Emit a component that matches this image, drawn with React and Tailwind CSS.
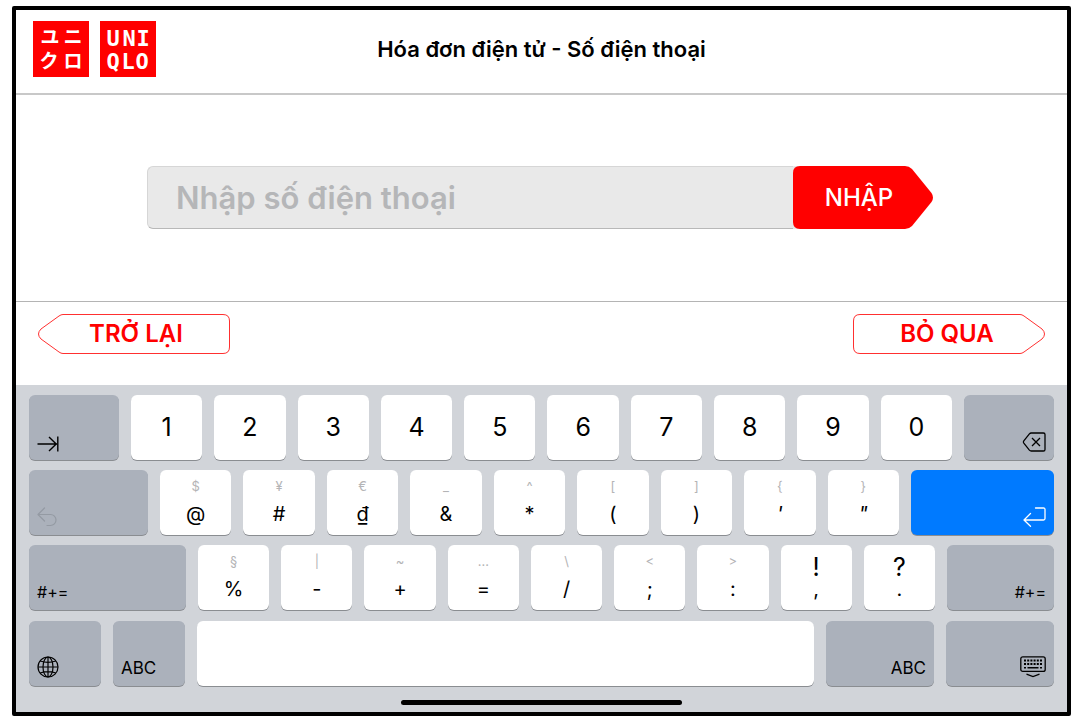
const digits = ['1', '2', '3', '4', '5', '6', '7', '8', '9', '0']

const symbolRow = [
  { alt: '$', main: '@' },
  { alt: '¥', main: '#' },
  { alt: '€', main: '₫' },
  { alt: '_', main: '&' },
  { alt: '^', main: '*' },
  { alt: '[', main: '(' },
  { alt: ']', main: ')' },
  { alt: '{', main: "'", slanted: true },
  { alt: '}', main: '"', slanted: true },
]

const punctuationRow = [
  { alt: '§', main: '%' },
  { alt: '|', main: '-' },
  { alt: '~', main: '+' },
  { alt: '…', main: '=' },
  { alt: '\\', main: '/' },
  { alt: '<', main: ';' },
  { alt: '>', main: ':' },
  { alt: '!', main: ',', strong: true },
  { alt: '?', main: '.', strong: true },
]

function Logo() {
  return (
    <div className="flex gap-[11px]">
      <svg viewBox="0 0 56 56" className="h-14 w-14" role="img" aria-label="ユニクロ">
        <rect width="56" height="56" fill="#ff0000" />
        <g fill="#fff" fontFamily="'Noto Sans CJK JP', sans-serif" fontWeight="700" fontSize="19" textAnchor="middle">
          <text x="17" y="23">ユ</text>
          <text x="40" y="23">ニ</text>
          <text x="16" y="47">ク</text>
          <text x="40" y="47">ロ</text>
        </g>
      </svg>
      <svg viewBox="0 0 56 56" className="h-14 w-14" role="img" aria-label="UNIQLO">
        <rect width="56" height="56" fill="#ff0000" />
        <g fill="#fff" fontFamily="'DejaVu Sans Mono', monospace" fontWeight="700" fontSize="22" textAnchor="middle">
          <text x="13" y="25">U</text>
          <text x="29" y="25">N</text>
          <text x="43" y="25">I</text>
          <text x="13" y="48">Q</text>
          <text x="28" y="48">L</text>
          <text x="42" y="48">O</text>
        </g>
      </svg>
    </div>
  )
}

function TabIcon() {
  return (
    <svg viewBox="0 0 22 16" className="h-4 w-[22px]" fill="none" stroke="currentColor" strokeWidth="1.4">
      <path d="M0.5 8H20M12 1l7.2 7-7.2 7M20.8 0.5v15" />
    </svg>
  )
}

function DeleteIcon() {
  return (
    <svg viewBox="0 0 24 20" className="h-5 w-6" fill="none" stroke="currentColor" strokeWidth="1.3" strokeLinejoin="round">
      <path d="M9.2 1H21.4Q23 1 23 2.6V17.4Q23 19 21.4 19H9.2Q8.2 19 7.4 18.1L1.8 11.2Q0.9 10 1.8 8.8L7.4 1.9Q8.2 1 9.2 1Z" />
      <path d="M10 6l8 8M18 6l-8 8" />
    </svg>
  )
}

function UndoIcon() {
  return (
    <svg viewBox="0 0 20 20" className="h-5 w-5" fill="none" stroke="currentColor" strokeWidth="1.2" strokeLinecap="round" strokeLinejoin="round">
      <path d="M7.5 1L1 7.5l6.5 6.5M1 7.5h12.5a5.5 5.5 0 0 1 0 11H10" />
    </svg>
  )
}

function ReturnIcon() {
  return (
    <svg viewBox="0 0 23 20" className="h-5 w-[23px]" fill="none" stroke="currentColor" strokeWidth="1.3" strokeLinecap="round" strokeLinejoin="round">
      <path d="M7.5 6.5L1 13l6.5 6.2M1 13h19.5q1.5 0 1.5-1.5v-9Q22 1 20.5 1H12.5" />
    </svg>
  )
}

function GlobeIcon() {
  return (
    <svg viewBox="0 0 22 22" className="h-[22px] w-[22px]" fill="none" stroke="currentColor" strokeWidth="1.2">
      <circle cx="11" cy="11" r="10" />
      <ellipse cx="11" cy="11" rx="5" ry="10" />
      <path d="M11 1v20M1 11h20M3.2 5q7.8 2.6 15.6 0M3.2 17q7.8-2.6 15.6 0" />
    </svg>
  )
}

function KeyboardIcon() {
  return (
    <svg viewBox="0 0 26 22" className="h-[22px] w-[26px]" fill="none" stroke="currentColor" strokeWidth="1.3">
      <rect x="0.8" y="0.8" width="24.4" height="14.6" rx="2" />
      <path d="M4 4.5h18M4 8h18" strokeWidth="1.8" strokeDasharray="2 1.2" />
      <path d="M4 11.7h2M7.5 11.7h11M20 11.7h2" strokeWidth="1.6" />
      <path d="M6.5 18.2l6.5 2.4 6.5-2.4" />
    </svg>
  )
}

function LetterKey({ alt, main, slanted, strong }) {
  return (
    <button
      type="button"
      className="flex h-[65px] flex-1 flex-col items-center rounded-md bg-white pt-2 text-black shadow-[0_1px_0_#8a8d91]"
    >
      <span className={strong ? 'h-6 text-[25px] leading-7' : 'h-6 text-[13px] leading-4 text-[#b4b4b6]'}>{alt}</span>
      <span className={slanted ? 'text-xl leading-6 italic' : 'text-xl leading-6'}>{main}</span>
    </button>
  )
}

function ActionKey({ label, className, children }) {
  return (
    <button
      type="button"
      aria-label={label}
      className={`flex h-[65px] items-end rounded-md px-2 pb-2 shadow-[0_1px_0_#8a8d91] ${className}`}
    >
      {children}
    </button>
  )
}

function Keyboard() {
  return (
    <section aria-label="Keyboard" className="bg-[#d1d4d9] px-[13px] pt-[10px] pb-[7px]">
      <div className="flex flex-col gap-[10px]">
        <div className="flex gap-3">
          <ActionKey label="Tab" className="w-[90px] bg-[#abb1bb]">
            <TabIcon />
          </ActionKey>
          {digits.map((digit) => (
            <button
              key={digit}
              type="button"
              className="h-[65px] flex-1 rounded-md bg-white text-[25px] text-black shadow-[0_1px_0_#8a8d91]"
            >
              {digit}
            </button>
          ))}
          <ActionKey label="Delete" className="w-[90px] justify-end bg-[#abb1bb]">
            <DeleteIcon />
          </ActionKey>
        </div>

        <div className="flex gap-3">
          <ActionKey label="Undo" className="w-[119px] bg-[#abb1bb] text-[#949aa3]">
            <UndoIcon />
          </ActionKey>
          {symbolRow.map((key) => (
            <LetterKey key={key.main} {...key} />
          ))}
          <ActionKey label="Return" className="w-[143px] justify-end bg-[#007aff] text-white">
            <ReturnIcon />
          </ActionKey>
        </div>

        <div className="flex gap-3">
          <ActionKey className="w-[157px] bg-[#abb1bb]">
            <span className="text-base leading-5">#+=</span>
          </ActionKey>
          {punctuationRow.map((key) => (
            <LetterKey key={key.main} {...key} />
          ))}
          <ActionKey className="w-[107px] justify-end bg-[#abb1bb]">
            <span className="text-base leading-5">#+=</span>
          </ActionKey>
        </div>

        <div className="flex gap-3 pt-px">
          <ActionKey label="Language" className="w-[72px] bg-[#abb1bb]">
            <GlobeIcon />
          </ActionKey>
          <ActionKey className="w-[72px] bg-[#abb1bb]">
            <span className="text-[17px] leading-5">ABC</span>
          </ActionKey>
          <button
            type="button"
            aria-label="Space"
            className="h-[65px] flex-1 rounded-md bg-white shadow-[0_1px_0_#8a8d91]"
          />
          <ActionKey className="w-[108px] justify-end bg-[#abb1bb]">
            <span className="text-[17px] leading-5">ABC</span>
          </ActionKey>
          <ActionKey label="Hide keyboard" className="w-[108px] justify-end bg-[#abb1bb]">
            <KeyboardIcon />
          </ActionKey>
        </div>
      </div>

      <div className="mx-auto mt-[14px] h-[5px] w-[281px] rounded-full bg-black" />
    </section>
  )
}

export default function App() {
  return (
    <div className="bg-white pt-[6px] pr-[11px] pb-[3px] pl-3 font-['Inter',sans-serif] text-black">
      <div className="rounded-xs border-4 border-black">
        <header className="grid grid-cols-[1fr_auto_1fr] items-center border-b-2 border-[#c8c8c8] px-[17px] pt-[11px] pb-4">
          <Logo />
          <h1 className="text-[22px] leading-7 font-semibold">Hóa đơn điện tử - Số điện thoại</h1>
        </header>

        <main>
          <form className="flex border-b border-[#b4b4b4] pt-[71px] pr-[134px] pb-[72px] pl-[131px]">
            <input
              type="tel"
              aria-label="Nhập số điện thoại"
              placeholder="Nhập số điện thoại"
              className="h-[63px] min-w-0 flex-1 rounded-l-md border border-r-0 border-[#d6d6d6] border-b-[#b8b8b8] bg-[#e9e9e9] px-7 text-[31px] font-semibold outline-none placeholder:text-[#b5b6b8]"
            />
            <button
              type="button"
              className="relative h-[63px] w-[140px] bg-[linear-gradient(90deg,#e9e9e9_8px,transparent_8px)] pr-2 text-2xl font-medium text-white"
            >
              <svg viewBox="0 0 140 63" className="absolute inset-0 h-full w-full" aria-hidden="true">
                <path
                  d="M7 0H112Q116 0 119 3L138.5 27Q141.5 31.5 138.5 36L119 60Q116 63 112 63H7Q0 63 0 56V7Q0 0 7 0Z"
                  fill="#ff0000"
                />
              </svg>
              <span className="relative">NHẬP</span>
            </button>
          </form>

          <nav className="flex justify-between px-[22px] pt-3 pb-[31px]">
            <button type="button" className="relative h-10 w-48 pl-1 text-2xl font-semibold text-[#ff0000]">
              <svg viewBox="0 0 192 40" className="absolute inset-0 h-full w-full" fill="none" stroke="#ff3030" aria-hidden="true">
                <path d="M25 0.5H185Q191.5 0.5 191.5 7V33Q191.5 39.5 185 39.5H25Q23 39.5 21 38L3 25Q-2 20 3 15L21 2Q23 0.5 25 0.5Z" />
              </svg>
              <span className="relative">TRỞ LẠI</span>
            </button>
            <button type="button" className="relative h-10 w-48 pr-1 text-2xl font-semibold text-[#ff0000]">
              <svg viewBox="0 0 192 40" className="absolute inset-0 h-full w-full" fill="none" stroke="#ff3030" aria-hidden="true">
                <path d="M167 0.5H7Q0.5 0.5 0.5 7V33Q0.5 39.5 7 39.5H167Q169 39.5 171 38L189 25Q194 20 189 15L171 2Q169 0.5 167 0.5Z" />
              </svg>
              <span className="relative">BỎ QUA</span>
            </button>
          </nav>
        </main>

        <Keyboard />
      </div>
    </div>
  )
}
